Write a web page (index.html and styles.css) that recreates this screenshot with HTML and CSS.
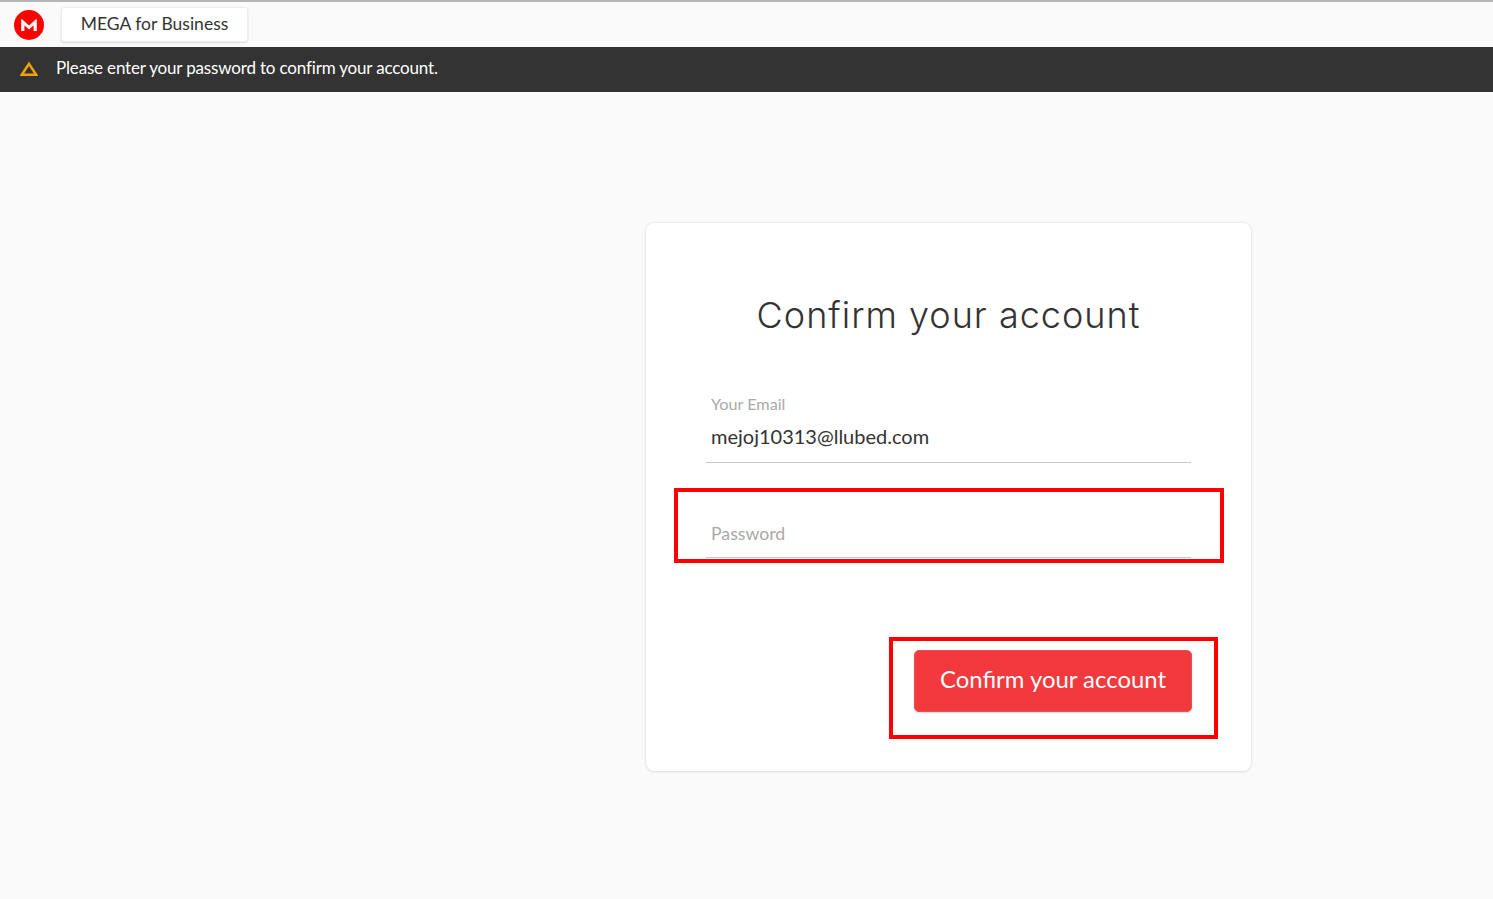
FILE: index.html
```html
<!DOCTYPE html>
<html lang="en">
<head>
<meta charset="utf-8">
<title>Confirm your account</title>
<link rel="stylesheet" href="styles.css">
</head>
<body>
<header class="topbar">
  <svg class="logo" viewBox="0 0 30 30" width="30" height="30" aria-label="MEGA">
    <circle cx="15" cy="15" r="15" fill="#ff0000"/>
    <path d="M7.2 21V9.6a.5.5 0 0 1 .85-.35L15 15.6l6.95-6.35a.5.5 0 0 1 .85.35V21h-3.2v-5.8L15 19.4l-4.6-4.2V21z" fill="#fff"/>
  </svg>
  <button class="biz-btn"><span class="biz-label">MEGA for Business</span></button>
</header>
<div class="banner">
  <svg class="warn" viewBox="0 0 18 15" width="18" height="15">
    <path d="M9 2.8 16.2 13.8H1.8z" fill="none" stroke="#f5a20a" stroke-width="2.4"/>
  </svg>
  <span class="banner-text">Please enter your password to confirm your account.</span>
</div>
<main class="page">
  <section class="card">
    <h1 class="title">Confirm your account</h1>
    <div class="field field-email">
      <div class="label">Your Email</div>
      <div class="value">mejoj10313@llubed.com</div>
    </div>
    <div class="field field-pass">
      <div class="placeholder">Password</div>
    </div>
    <div class="actions">
      <button class="confirm"><span class="confirm-label">Confirm your account</span></button>
    </div>
    <div class="mark mark-pass"></div>
    <div class="mark mark-btn"></div>
  </section>
</main>
</body>
</html>
```

FILE: styles.css
```css
* { box-sizing: border-box; }
html, body { margin: 0; height: 100%; }
body {
  background: #fafafa;
  font-family: "Lato", "Liberation Sans", sans-serif;
  color: #333;
  overflow: hidden;
}
.topbar {
  height: 47px;
  border-top: 2px solid #b5b5b5;
  display: flex;
  align-items: center;
  padding-left: 14px;
  gap: 17px;
}
.logo { flex: none; margin-top: 1px; }
.biz-btn {
  width: 187px;
  height: 35px;
  margin-top: -1px;
  background: #fff;
  border: 1px solid #ececec;
  border-radius: 3px;
  box-shadow: 0 1px 2px rgba(0,0,0,.12);
  font: 400 17.5px "Lato", sans-serif;
  color: #333;
  padding: 0 0 2px;
}
.banner {
  height: 45px;
  background: #333333;
  display: flex;
  align-items: center;
  padding: 0 0 4px 20px;
  gap: 18px;
}
.warn { flex: none; margin-top: 1px; }
.banner-text {
  color: #fff;
  font-size: 17px;
  letter-spacing: -0.17px;
}
.page { padding: 131px 0 0 646px; }
.card {
  position: relative;
  width: 605px;
  height: 548px;
  background: #fff;
  border-radius: 8px;
  box-shadow: 0 0 3px rgba(0,0,0,.12), 0 1px 3px rgba(0,0,0,.06);
  padding: 69px 60px 0;
}
.title {
  margin: 0;
  text-align: center;
  font-family: "Inter", "Lato", sans-serif;
  font-weight: 300;
  font-size: 36px;
  line-height: 46px;
  letter-spacing: 1px;
  color: #333;
}
.field {
  width: 485px;
  border-bottom: 1px solid #c9c9c9;
  padding-left: 5px;
}
.field-email { margin-top: 54px; height: 71px; padding-top: 1px; }
.label { font-size: 16.2px; line-height: 22px; color: #a9a9a9; }
.value { font-size: 20px; line-height: 26px; margin-top: 8px; color: #333; }
.field-pass { margin-top: 24px; height: 71px; padding-top: 34px; }
.placeholder { font-size: 17.7px; line-height: 26px; color: #a9a9a9; }
.actions { display: flex; justify-content: flex-end; margin-top: 92px; width: 486px; }
.confirm {
  width: 278px;
  height: 62px;
  background: #f2393d;
  border: 1px solid #ea4f53;
  border-radius: 5px;
  box-shadow: 0 1px 2px rgba(0,0,0,.15);
  color: #fff;
  font: 400 23.9px "Lato", sans-serif;
  padding: 0 0 5px;
}
.mark { position: absolute; border: 4px solid #ff0000; }
.mark-pass { left: 28px; top: 265px; width: 550px; height: 75px; }
.mark-btn { left: 243px; top: 414px; width: 329px; height: 102px; }
```
